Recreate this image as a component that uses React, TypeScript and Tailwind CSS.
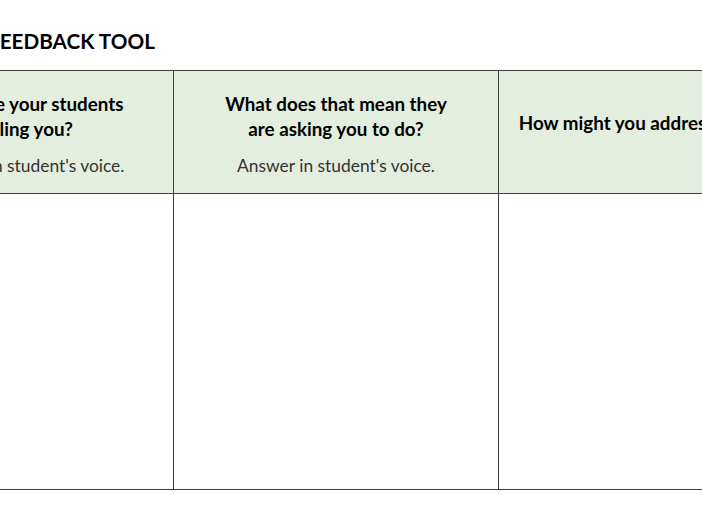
export default function App() {
  const cols = [
    {
      title: ['What are your students', 'telling you?'],
      note: "Answer in student's voice.",
      w: 'w-[296px]',
      pt: 'pt-[20px]',
    },
    {
      title: ['What does that mean they', 'are asking you to do?'],
      note: "Answer in student's voice.",
      w: 'w-[325px]',
      pt: 'pt-[20px]',
    },
    {
      title: ['How might you address this issue?'],
      note: '',
      w: 'w-[325px]',
      pt: 'pt-[39px]',
    },
  ];

  return (
    <div className="w-[702px] h-[526px] overflow-hidden bg-white font-['Lato',sans-serif] text-black">
      <h1 className="ml-[-12px] mt-[28px] text-[20.7px] font-bold leading-[26px] whitespace-nowrap">
        FEEDBACK TOOL
      </h1>
      <div className="ml-[-122px] mt-[16px] flex w-max border-t border-b border-[#3f3f3f]">
        {cols.map((c, i) => (
          <div key={i} className={`${c.w} shrink-0 flex flex-col ${i < 2 ? 'border-r border-[#3f3f3f]' : ''}`}>
            <div className={`h-[123px] bg-[#e4eedf] border-b border-[#3f3f3f] ${c.pt} text-center`}>
              {c.title.map((t) => (
                <div key={t} className="text-[18.8px] font-bold leading-[25px] whitespace-nowrap">
                  {t}
                </div>
              ))}
              {c.note && (
                <div className="mt-[13px] text-[17.4px] leading-[24px] text-[#333] whitespace-nowrap">
                  {c.note}
                </div>
              )}
            </div>
            <div className="h-[295px]" />
          </div>
        ))}
      </div>
    </div>
  );
}
